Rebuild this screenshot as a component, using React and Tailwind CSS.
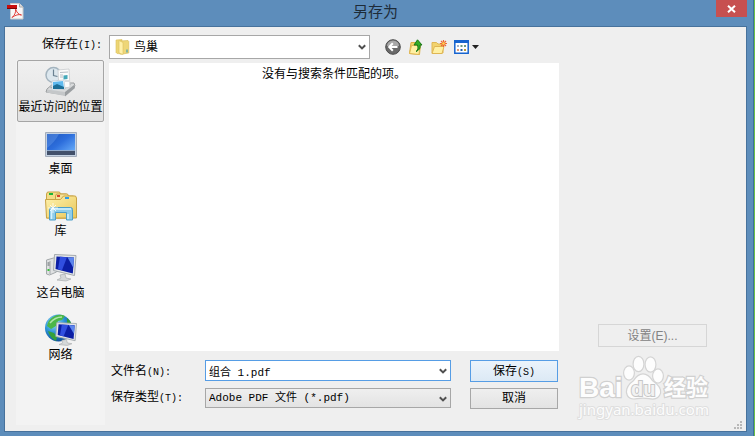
import React from "react";

const ui = "font-['Liberation_Sans','Noto_Sans_CJK_SC',sans-serif]";
const mono = "font-['Liberation_Mono','Noto_Sans_CJK_SC',monospace]";

function PdfIcon() {
  return (
    <svg width="17" height="17" viewBox="0 0 17 17" className="ml-[3px]" aria-hidden="true">
      <path d="M3.5 .5h9l3.500 3.500v12h-12.500z" fill="#f7f7f7" stroke="#c9c9c9" />
      <path d="M12.500 .5v3.500h3.500" fill="#ddd" stroke="#aaa" />
      <path d="M8.500 5.500c1 4 3 6 6 6.500-3-1-6 0-9.500 2.500 2.500-2 4-5 3.500-8z" fill="none" stroke="#e23f3a" />
      <path d="M0 2h10v3.500H0z" fill="#c80d0d" />
      <path d="M0 5h10v1H0z" fill="#7d0505" />
    </svg>
  );
}

function RecentIcon() {
  return (
    <svg width="32" height="32" viewBox="0 0 32 32" aria-hidden="true">
      <path d="M2 23l7-6h20l1 3-9 9-20-3z" fill="#d9dbdc" stroke="#9a9d9f" />
      <path d="M2 23.500l18 2.500v4L2 26.500z" fill="#c4c7c9" />
      <path d="M20 26l9-7 1 3-10 8.500z" fill="#9a9ea1" />
      <path d="M5 22l5-4h16l-7 5.500z" fill="#8f9497" />
      <circle cx="8.500" cy="9" r="7.500" fill="#dce7ee" stroke="#a3b3be" strokeWidth="1.500" />
      <path d="M8.500 3.500V9.500l4 1" fill="none" stroke="#6a8192" strokeWidth="1.200" />
      <path d="M13 4l11-1 1 18-11 2z" fill="#fbfbfb" stroke="#c9ccce" strokeWidth=".8" />
      <path d="M15 6.500l8-.5M15 9h3M15 11h3M20 15h4" stroke="#b5bcc3" />
      <path d="M18.500 9.500l4-.5v4l-4 .5z" fill="#45a8b9" />
      <path d="M7 15l12-1 1 9-13 1z" fill="#f6fafc" stroke="#c3ced7" strokeWidth=".8" />
      <path d="M8 16l10-1 1 7H8z" fill="#5fb9ee" />
      <path d="M8 20l4-2 7 3v2H8z" fill="#1d6f97" />
    </svg>
  );
}

function DesktopIcon() {
  return (
    <svg width="32" height="32" viewBox="0 0 32 32" aria-hidden="true">
      <defs>
        <linearGradient id="desk" x1="0" y1="0" x2="1" y2="1">
          <stop offset="0" stopColor="#1c55bd" />
          <stop offset=".45" stopColor="#2d6edc" />
          <stop offset="1" stopColor="#74b9ff" />
        </linearGradient>
      </defs>
      <path d="M.5 4.500h31v24H.5z" fill="#c3d1e2" stroke="#a4adbb" />
      <path d="M2 6h28v21H2z" fill="url(#desk)" />
      <path d="M2 6h12Q10 14 2 20z" fill="#6ba1ed" opacity=".4" />
      <path d="M2 22.500h28V27H2z" fill="#42506a" />
      <path d="M2 22h28v1H2z" fill="#8ea9cc" />
    </svg>
  );
}

function LibraryIcon() {
  return (
    <svg width="32" height="32" viewBox="0 0 32 32" aria-hidden="true">
      <defs>
        <linearGradient id="lib" x1="0" y1="0" x2="1" y2="1">
          <stop offset="0" stopColor="#fff3ae" />
          <stop offset="1" stopColor="#e9c75b" />
        </linearGradient>
      </defs>
      <path d="M1.500 28V4l1-2h12l1 2h6v24z" fill="#f3dc87" stroke="#c9a345" />
      <path d="M4 3h4v2H4z" fill="#19b53a" />
      <path d="M10.500 28V6l1-2h11l1 2h5v22z" fill="#f6e39a" stroke="#c9a345" />
      <path d="M12 5h3v2h-3z" fill="#d9432b" />
      <path d="M.5 9.500h15l3-3.500h12l1 2v20H1.500z" fill="url(#lib)" stroke="#c9a345" />
      <path d="M20 7h4v2h-4z" fill="#2e9be8" />
      <path d="M4.500 30V19.500q0-2 2-2h19q2 0 2 2V30h-6v-7.500h-11V30z" fill="#8fcdea" stroke="#4d9fca" />
      <path d="M6 19h20M6.500 20v9M23 24v5" stroke="#d5f2ff" strokeWidth="1.500" />
      <path d="M8 13v10M3 18h10M5 15l6 6M11 15l-6 6" stroke="#fff" strokeWidth=".8" />
    </svg>
  );
}

function Monitor() {
  return (
    <>
      <path d="M15 23l5-1 1 4 5 1-5 2-9-1 4-2z" fill="#d5d8d9" stroke="#a9adaf" strokeWidth=".7" />
      <path d="M9.500 2.500L31 3.500l-1.500 20L8.500 18.500z" fill="#e3e6e8" stroke="#a4aaae" />
      <path d="M11.500 4.500L29 5.500l-1.200 16L10.500 17z" fill="#0c1fa5" />
      <path d="M15 4.800l7 .5-5 13-4-1z" fill="#314fe0" />
      <path d="M22.500 5.300l6.500.4-.7 10z" fill="#5c86ee" />
    </>
  );
}

function ComputerIcon() {
  return (
    <svg width="32" height="32" viewBox="0 0 32 32" aria-hidden="true">
      <path d="M1.500 8l7-2 3 1v13l-7 3-3-1z" fill="#dfe1e2" stroke="#a3a8aa" />
      <path d="M5 9v13" stroke="#a3a8aa" />
      <path d="M2.500 11h2M2.500 13h2" stroke="#5b6265" />
      <path d="M2.500 18h2" stroke="#38c13a" strokeWidth="2" />
      <Monitor />
    </svg>
  );
}

function NetworkIcon() {
  return (
    <svg width="32" height="32" viewBox="0 0 32 32" aria-hidden="true">
      <defs>
        <radialGradient id="globe" cx=".35" cy=".3" r=".75">
          <stop offset="0" stopColor="#9fe2fb" />
          <stop offset=".5" stopColor="#2b93d6" />
          <stop offset="1" stopColor="#0c4a94" />
        </radialGradient>
      </defs>
      <circle cx="13.500" cy="14" r="13.500" fill="url(#globe)" />
      <path d="M8 3q6-4 12-1l-3 4-4 1-2 5-5 3-4-3q1-6 6-9z" fill="#4cb748" />
      <path d="M3 17l6 2 3 4-1 4Q5 24 3 17z" fill="#35a03a" />
      <path d="M22 4q5 4 5 9l-5-3z" fill="#2f9c3a" />
      <path d="M5 9q5-6 12-6" fill="none" stroke="#d8f7d6" strokeWidth="1.500" opacity=".7" />
      <g transform="translate(3 6.500) scale(.92 .86)">
        <Monitor />
      </g>
    </svg>
  );
}

function Chevron({ className }) {
  return (
    <svg width="8" height="7" viewBox="0 0 8 7" aria-hidden="true" className={"pointer-events-none absolute " + className}>
      <path d="M.8 1.200L4 4.400l3.200-3.200" fill="none" stroke="#505050" strokeWidth="2" />
    </svg>
  );
}

function FolderIcon() {
  return (
    <svg width="16" height="16" viewBox="0 0 16 16" aria-hidden="true" className="pointer-events-none absolute top-1 left-1.5">
      <path d="M1 1l6-.5V15l-5-.5-1-1z" fill="#edd675" stroke="#dcc05a" strokeWidth=".6" />
      <path d="M5 2l8-.5.800 1V14l-6 1H5z" fill="#eed677" stroke="#d5b952" strokeWidth=".6" />
      <path d="M4 1.500l4 2v12l-4-1.500z" fill="#fff0a8" stroke="#dcc05a" strokeWidth=".6" />
      <path d="M12 10.500v3" stroke="#4aa3b5" strokeWidth="1.300" />
    </svg>
  );
}

function BackIcon() {
  return (
    <svg width="16" height="16" viewBox="0 0 16 16" aria-hidden="true">
      <circle cx="8" cy="8" r="7.300" fill="#6a6a6a" stroke="#4d4d4d" />
      <path d="M2 7a6 5.500 0 0 1 12 0z" fill="#a8a8a8" />
      <path d="M12.500 8H4.500M7.800 4.300L4.200 8l3.600 3.700" fill="none" stroke="#fff" strokeWidth="2" />
    </svg>
  );
}

function UpIcon() {
  return (
    <svg width="16" height="16" viewBox="0 0 16 16" aria-hidden="true">
      <path d="M1.500 14.500L3 3.500h4l1 1.500h4.500l-1 10.500z" fill="#f3d36a" stroke="#dcb048" />
      <path d="M1.500 14.500l2-8H12l-1 9z" fill="#fff0a3" stroke="#dfb654" />
      <path d="M8 12.500q3-2 1.500-6.500H6L9.500 .8 14 6h-2q1 4.500-4 6.500z" fill="#35ad27" stroke="#177716" />
    </svg>
  );
}

function NewFolderIcon() {
  return (
    <svg width="16" height="16" viewBox="0 0 16 16" aria-hidden="true">
      <path d="M1 14V3.500h4.500L7 5h5v9z" fill="#f2d36d" stroke="#dfb654" />
      <path d="M1 14.500l2.500-7H13l-2 7z" fill="#fff0a3" stroke="#dfb654" />
      <path d="M12.500 1v7M9 4.500h7M10 2l5 5M15 2l-5 5" stroke="#ec6a35" strokeWidth="1.200" />
      <circle cx="12.500" cy="4.500" r="1.300" fill="#ffd552" />
    </svg>
  );
}

function ViewIcon() {
  return (
    <svg width="25" height="16" viewBox="0 0 25 16" aria-hidden="true">
      <path d="M.8 1.800h13.400v12.400H.8z" fill="#fff" stroke="#1764cf" strokeWidth="1.500" />
      <path d="M0 1h15v3H0z" fill="#1764cf" />
      <path d="M3 6h2v2H3z" fill="#9fb2cc" />
      <path d="M6.500 6h2v2h-2zM10 6h2v2h-2z" fill="#6e9c80" />
      <path d="M3 10h2v2H3z" fill="#e39a72" />
      <path d="M6.500 10h2v2h-2z" fill="#1e5fb0" />
      <path d="M10 10h2v2h-2z" fill="#bd9a34" />
      <path d="M18 6h7l-3.500 4z" fill="#222" />
    </svg>
  );
}

function Watermark() {
  return (
    <svg width="150" height="72" viewBox="0 0 150 72" role="img" aria-label="Baidu" className="ml-3.5 mt-1.5 select-none">
      <g fill="#fdfdfd" stroke="#d4d4d4" strokeWidth="2.400" className="[paint-order:stroke]">
        <ellipse cx="56" cy="20" rx="4.800" ry="6.500" />
        <ellipse cx="65.500" cy="11" rx="4.800" ry="7" />
        <ellipse cx="77.500" cy="11.500" rx="4.800" ry="7" />
        <ellipse cx="85" cy="23" rx="4.800" ry="6.500" />
        <path d="M70 21.500q5 0 9 6.500 9 6 8 12-2 7-11 5-6-1-12 0-9 2-10-6 0-6 7-11 4-6.500 9-6.500z" />
      </g>
      <g className="font-['Liberation_Sans','Noto_Sans_CJK_SC',sans-serif] font-bold [paint-order:stroke]" fill="#fdfdfd" stroke="#d0d0d0" strokeWidth="2.400">
        <text x="6" y="44" fontSize="28">Bai</text>
        <text x="91" y="42" fontSize="22">经验</text>
        <text x="58" y="43" fontSize="20" fill="#f2f2f2" stroke="#c6c6c6" strokeWidth="2">du</text>
      </g>
      <text x="6" y="62" fontSize="15" fill="#fcfcfc" stroke="#dfdfdf" strokeWidth="2" className="font-['Noto_Sans',sans-serif] [paint-order:stroke]">
        jingyan.baidu.com
      </text>
    </svg>
  );
}

function Half({ children }) {
  return <span className="text-[10px]">{children}</span>;
}

const places = [
  { label: "最近访问的位置", Icon: RecentIcon, active: true },
  { label: "桌面", Icon: DesktopIcon },
  { label: "库", Icon: LibraryIcon },
  { label: "这台电脑", Icon: ComputerIcon },
  { label: "网络", Icon: NetworkIcon },
];

const tools = [
  { label: "返回", Icon: BackIcon },
  { label: "向上一级", Icon: UpIcon },
  { label: "新建文件夹", Icon: NewFolderIcon },
  { label: "查看", Icon: ViewIcon },
];

export default function App() {
  return (
    <div className={"flex min-h-screen border-r border-[#6cc04a] bg-[#5d8dbb] text-xs text-black " + ui}>
      <div className="flex flex-1 flex-col border-r border-[#3d6e9e]">
        <header className="grid h-[26px] grid-cols-[1fr_auto_1fr] items-start pr-1.5 pl-1">
          <div className="pt-[3px]">
            <PdfIcon />
          </div>
          <h1 className="text-[15px] leading-6 text-[#1d2b38]">另存为</h1>
          <button aria-label="关闭" className="flex h-[17px] w-[31px] items-center justify-center justify-self-end bg-[#c75050]">
            <svg width="9" height="8" viewBox="0 0 9 8" aria-hidden="true">
              <path d="M1 .7l7 6.600M8 .7L1 7.300" stroke="#fff" strokeWidth="2" />
            </svg>
          </button>
        </header>

        <main className="mr-1.5 mb-1 ml-1 flex flex-1 border border-[#47729c] bg-[#efefef]">
          <aside className="flex w-[104px] flex-col pb-1.5">
            <label htmlFor="folder" className={"h-[33px] pt-2 pl-[37px] leading-5 whitespace-nowrap " + mono}>
              保存在<Half>(I):</Half>
            </label>
            <nav className="mr-1 ml-[11px] flex-1 bg-[#f3f3f3] px-px">
              {places.map(({ label, Icon, active }) => (
                <button
                  key={label}
                  className={
                    "flex h-[62px] w-full flex-col items-center rounded-xs border pt-[5px] leading-[18px] whitespace-nowrap " +
                    (active ? "border-[#a5a5a5] bg-linear-to-b from-[#f0f0f0] to-[#e2e2e2]" : "border-transparent")
                  }
                >
                  <Icon />
                  {label}
                </button>
              ))}
            </nav>
          </aside>

          <section className="flex flex-1 flex-col pt-2 pb-[22px]">
            <div className="flex h-6 items-center">
              <div className="relative w-[261px]">
                <select id="folder" className={"h-6 w-full appearance-none border border-[#a7a7a7] bg-white pl-6 " + ui}>
                  <option>鸟巢</option>
                </select>
                <FolderIcon />
                <Chevron className="top-[9px] right-1" />
              </div>
              <div className="ml-[15px] flex gap-[7px]">
                {tools.map(({ label, Icon }) => (
                  <button key={label} aria-label={label}>
                    <Icon />
                  </button>
                ))}
              </div>
            </div>
            <div className="mt-1 flex-1 bg-white pt-0.5 text-center leading-[18px]">没有与搜索条件匹配的项。</div>

            <div className={"mt-[9px] grid grid-cols-[96px_1fr_107px] gap-y-[5px] pr-px " + mono}>
              <label htmlFor="name" className="pt-0.5 pl-0.5 leading-5">
                文件名<Half>(N):</Half>
              </label>
              <div className="relative">
                <input id="name" type="text" defaultValue="组合 1.pdf" className="h-[21px] w-full border border-[#569de5] bg-white pl-[3px] text-[11px] outline-none" />
                <Chevron className="top-2 right-1" />
              </div>
              <button className="ml-[19px] h-[22px] border border-[#569de5] bg-linear-to-b from-[#ebf3fb] to-[#dce9f5] pt-0.5">
                保存<Half>(S)</Half>
              </button>
              <label htmlFor="type" className="pl-0.5 leading-5">
                保存类型<Half>(T):</Half>
              </label>
              <div className="relative">
                <select id="type" className="h-5 w-full appearance-none border border-[#a7a7a7] bg-linear-to-b from-[#efefef] to-[#e3e3e3] pl-[3px] text-[11px]">
                  <option>Adobe PDF 文件 (*.pdf)</option>
                </select>
                <Chevron className="top-2 right-1" />
              </div>
              <button className="ml-[19px] h-[21px] border border-[#a7a7a7] bg-linear-to-b from-[#efefef] to-[#e3e3e3]">取消</button>
            </div>
          </section>

          <aside className="flex w-[187px] flex-col justify-end">
            <button disabled className="mr-[39px] h-[23px] w-[109px] self-end border border-[#d6d6d6] text-[#838383]">
              设置(E)...
            </button>
            <Watermark />
            <svg width="9" height="9" viewBox="0 0 9 9" className="mr-[3px] mb-px -mt-1 self-end" aria-hidden="true">
              <path d="M6 0h2v2H6zM3 3h2v2H3zM6 3h2v2H6zM0 6h2v2H0zM3 6h2v2H3zM6 6h2v2H6z" fill="#b8b8b8" />
            </svg>
          </aside>
        </main>
      </div>
    </div>
  );
}
